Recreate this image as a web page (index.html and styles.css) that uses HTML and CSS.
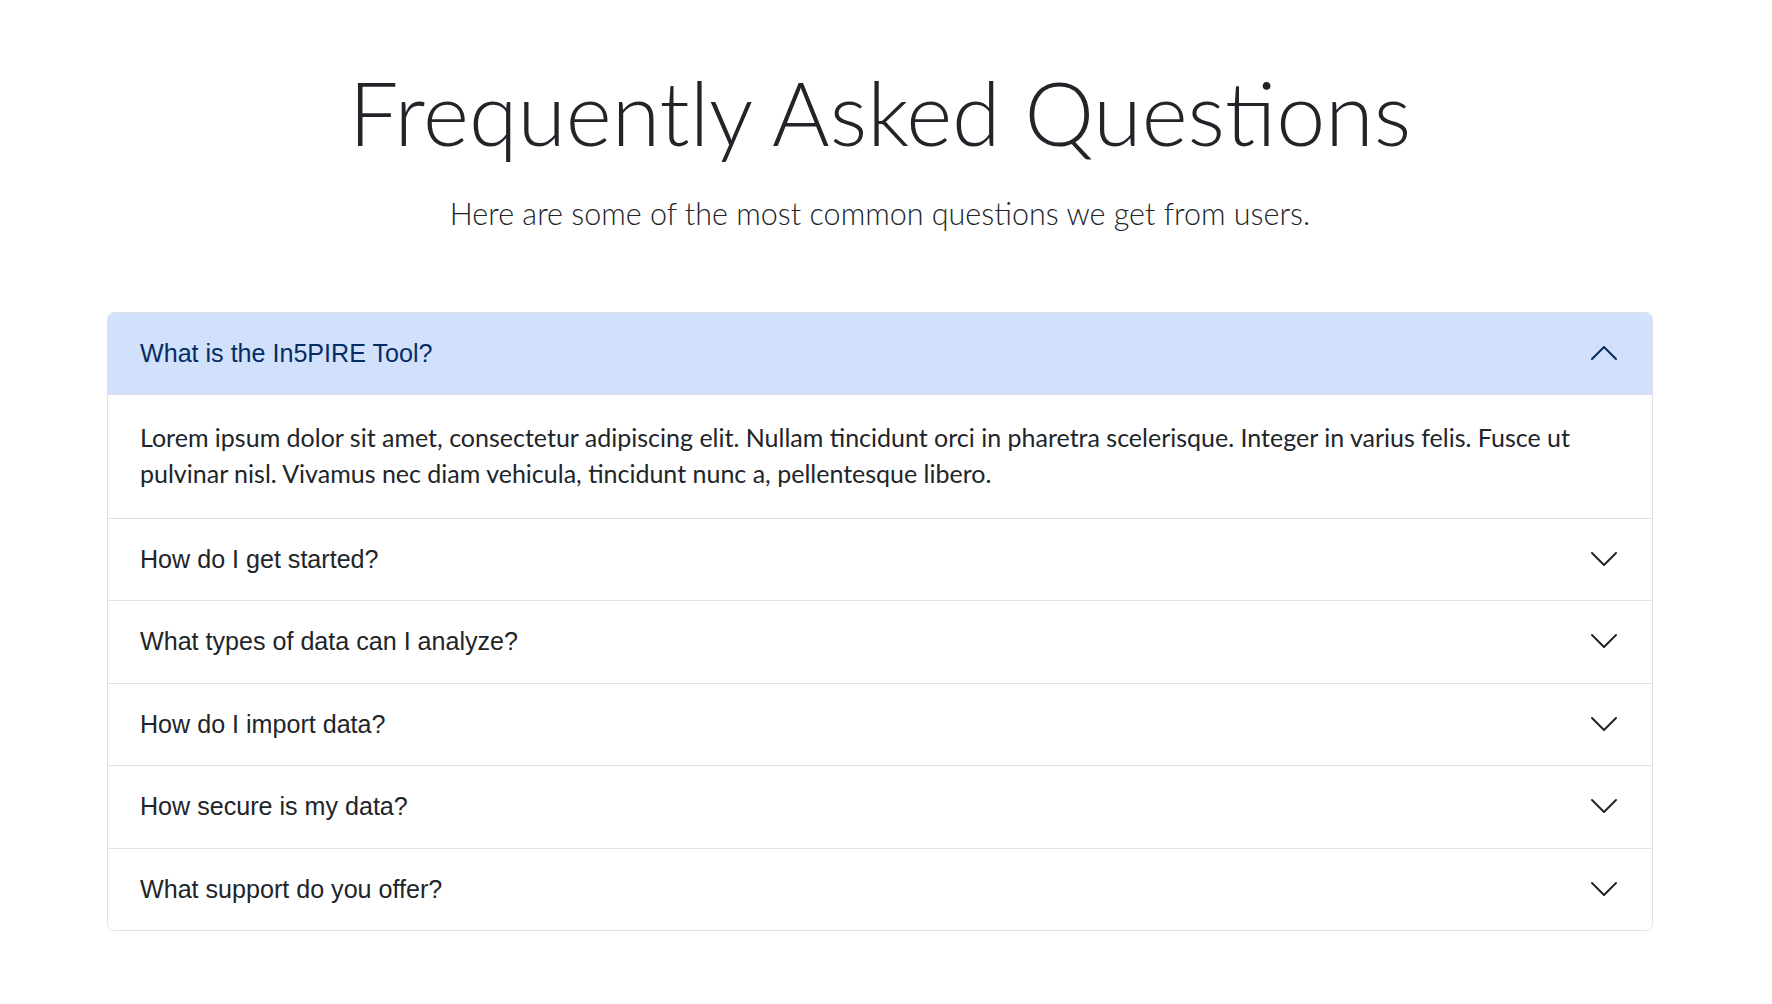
FILE: index.html
```html
<!DOCTYPE html>
<html lang="en">
<head>
<meta charset="utf-8">
<title>FAQ</title>
<link rel="stylesheet" href="styles.css">
</head>
<body>
<main class="page">
  <header class="intro">
    <h1 class="title">Frequently Asked Questions</h1>
    <p class="lead">Here are some of the most common questions we get from users.</p>
  </header>
  <div class="accordion">
    <div class="item">
      <button class="q open">
        <span>What is the In5PIRE Tool?</span>
        <svg class="chev" viewBox="0 0 16 16"><path d="M2 11L8 5L14 11"/></svg>
      </button>
      <div class="body">Lorem ipsum dolor sit amet, consectetur adipiscing elit. Nullam tincidunt orci in pharetra scelerisque. Integer in varius felis. Fusce ut pulvinar nisl. Vivamus nec diam vehicula, tincidunt nunc a, pellentesque libero.</div>
    </div>
    <div class="item">
      <button class="q"><span>How do I get started?</span><svg class="chev" viewBox="0 0 16 16"><path d="M2 5L8 11L14 5"/></svg></button>
    </div>
    <div class="item">
      <button class="q"><span>What types of data can I analyze?</span><svg class="chev" viewBox="0 0 16 16"><path d="M2 5L8 11L14 5"/></svg></button>
    </div>
    <div class="item">
      <button class="q"><span>How do I import data?</span><svg class="chev" viewBox="0 0 16 16"><path d="M2 5L8 11L14 5"/></svg></button>
    </div>
    <div class="item">
      <button class="q"><span>How secure is my data?</span><svg class="chev" viewBox="0 0 16 16"><path d="M2 5L8 11L14 5"/></svg></button>
    </div>
    <div class="item">
      <button class="q"><span>What support do you offer?</span><svg class="chev" viewBox="0 0 16 16"><path d="M2 5L8 11L14 5"/></svg></button>
    </div>
  </div>
</main>
</body>
</html>
```

FILE: styles.css
```css
html, body {
  margin: 0;
  padding: 0;
  background: #ffffff;
  color: #212529;
}

.page {
  width: 1546px;
  margin-left: 107px;
  padding-top: 60px;
}

.intro {
  text-align: center;
}

.title {
  margin: 0 0 23px;
  font-family: Lato, "Noto Sans", sans-serif;
  font-weight: 300;
  font-size: 88px;
  line-height: 1.2;
  color: #212529;
}

.lead {
  margin: 0 0 75px;
  font-family: Lato, "Noto Sans", sans-serif;
  font-weight: 300;
  font-size: 30.5px;
  line-height: 48px;
  color: #212529;
}

.accordion {
  border: 1px solid #dee2e6;
  border-radius: 7px;
  overflow: hidden;
}

.item + .item {
  border-top: 1px solid #dee2e6;
}

.q {
  display: flex;
  align-items: center;
  justify-content: space-between;
  width: 100%;
  height: 81.5px;
  padding: 0 32px 1px;
  margin: 0;
  border: 0;
  background: #ffffff;
  font-family: "Liberation Sans", Arial, sans-serif;
  font-size: 25.1px;
  line-height: 30px;
  color: #212529;
  text-align: left;
  cursor: pointer;
}

.q.open {
  height: 82px;
  background: #d2e1fb;
  color: #052c65;
  box-shadow: inset 0 -1px 0 #dee2e6;
}

.chev {
  width: 32px;
  height: 32px;
  flex: none;
  fill: none;
  stroke: #212529;
  stroke-width: 1;
  stroke-linecap: round;
  stroke-linejoin: round;
}

.q.open .chev {
  stroke: #052c65;
}

.body {
  padding: 24px 32px 27px;
  font-family: Lato, "Noto Sans", sans-serif;
  font-size: 25px;
  line-height: 36px;
  color: #212529;
}
```
